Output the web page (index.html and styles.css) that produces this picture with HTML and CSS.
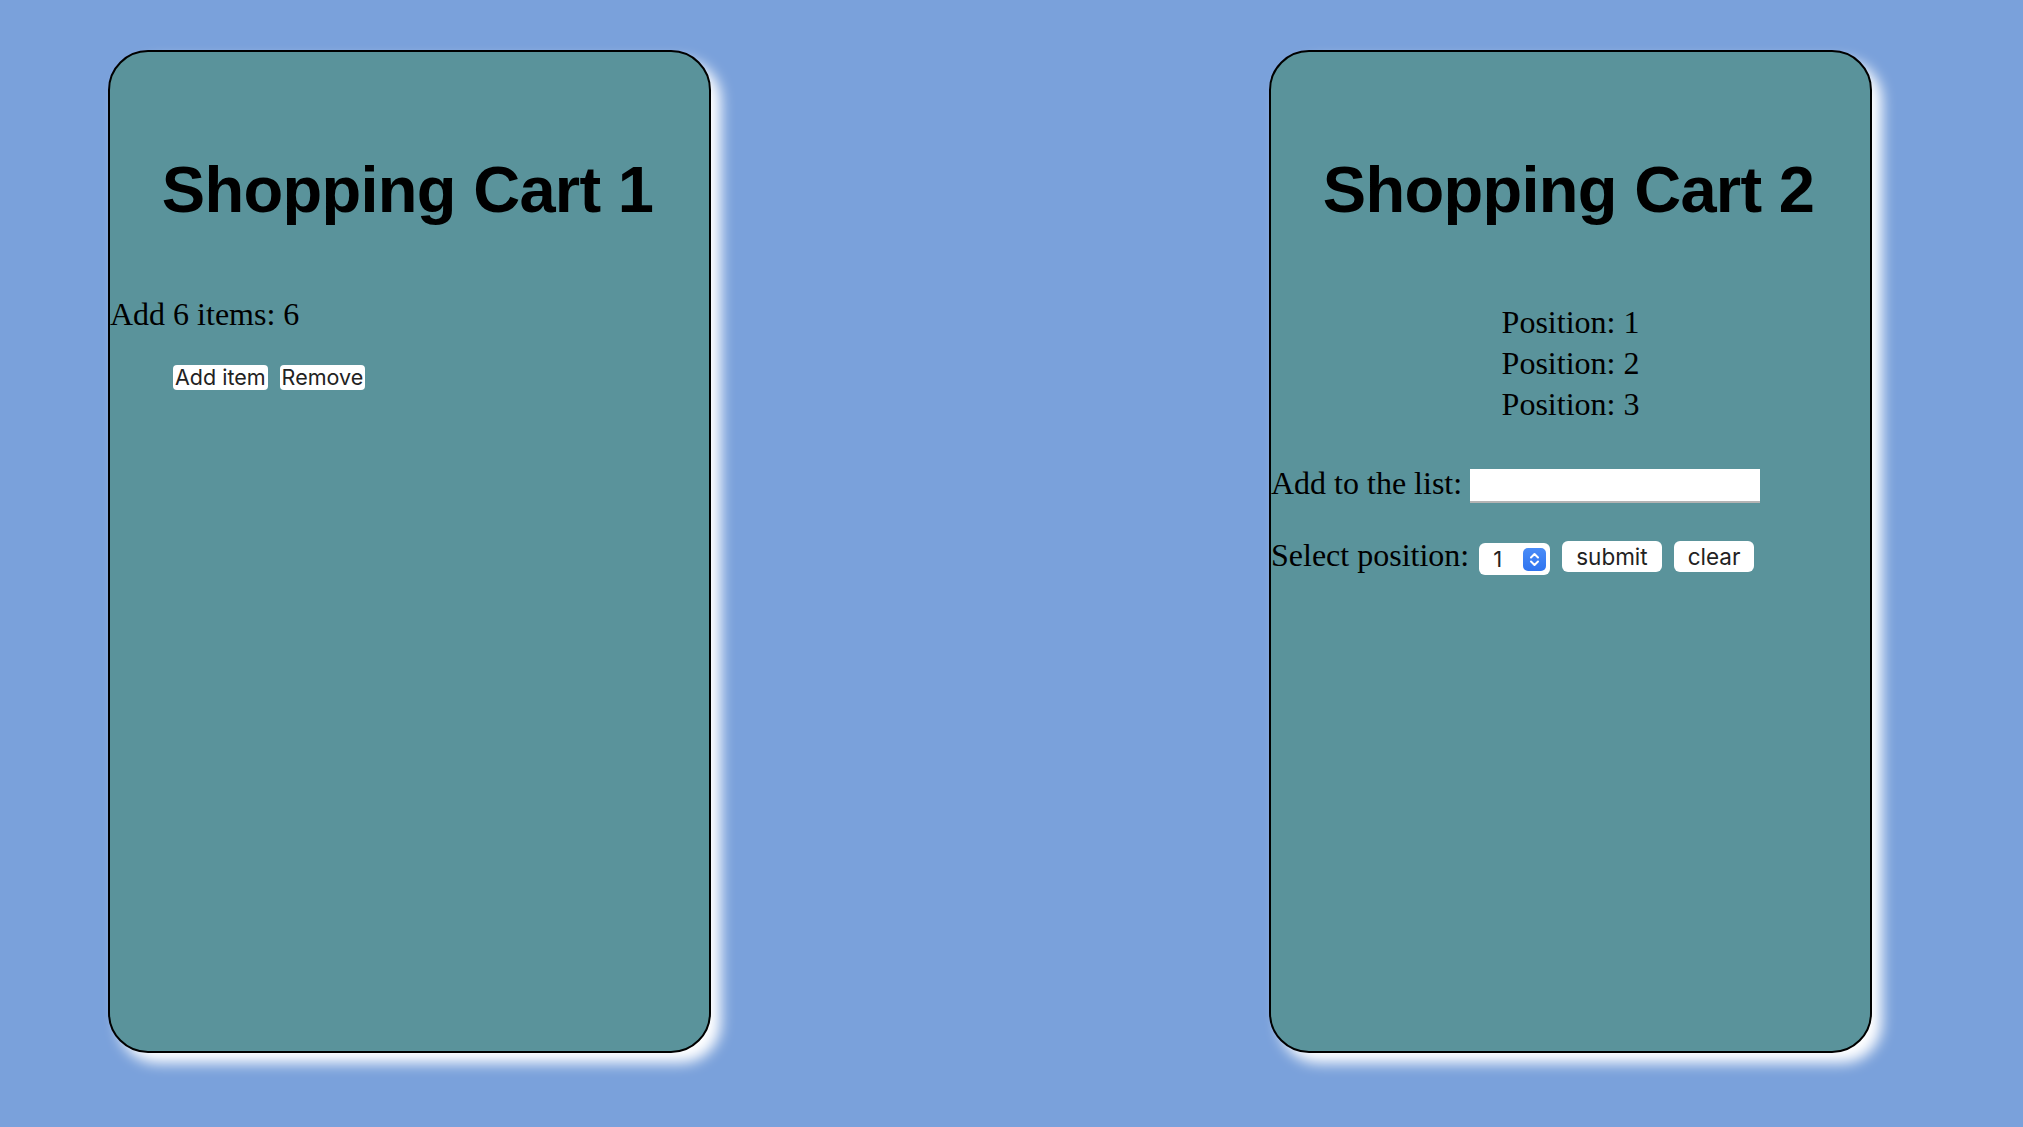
FILE: index.html
```html
<!DOCTYPE html>
<html lang="en">
<head>
<meta charset="utf-8">
<title>Shopping Carts</title>
<link rel="stylesheet" href="styles.css">
</head>
<body>
<main class="board">
  <section class="card">
    <h1 class="title">Shopping Cart 1</h1>
    <p class="count">Add 6 items: 6</p>
    <div class="actions">
      <button class="btn-small" type="button">Add item</button>
      <button class="btn-small" type="button">Remove</button>
    </div>
  </section>

  <section class="card">
    <h1 class="title">Shopping Cart 2</h1>
    <ul class="positions">
      <li>Position: 1</li>
      <li>Position: 2</li>
      <li>Position: 3</li>
    </ul>
    <div class="add-row">
      <label class="row-label" for="item">Add to the list:</label>
      <input class="text-input" id="item" type="text">
    </div>
    <div class="select-row">
      <label class="row-label" for="pos">Select position:</label>
      <span class="select-wrap">
        <select class="pos-select" id="pos">
          <option>1</option>
          <option>2</option>
          <option>3</option>
        </select>
        <span class="select-badge">
          <svg width="23" height="23" viewBox="0 0 23 23" aria-hidden="true">
            <path d="M8 9.5 L11.5 6 L15 9.5" fill="none" stroke="#fff" stroke-width="2" stroke-linecap="round" stroke-linejoin="round"/>
            <path d="M8 13.5 L11.5 17 L15 13.5" fill="none" stroke="#fff" stroke-width="2" stroke-linecap="round" stroke-linejoin="round"/>
          </svg>
        </span>
      </span>
      <button class="btn submit" type="button">submit</button>
      <button class="btn clear" type="button">clear</button>
    </div>
  </section>
</main>
</body>
</html>
```

FILE: styles.css
```css
html, body {
  margin: 0;
  padding: 0;
}

body {
  background: #7aa1db;
  min-height: 100vh;
  font-family: "Liberation Serif", "Times New Roman", serif;
  color: #000;
}

.board {
  display: flex;
  align-items: flex-start;
  gap: 558px;
  padding: 50px 0 0 108px;
}

.card {
  box-sizing: border-box;
  width: 603px;
  height: 1003px;
  flex: none;
  background: #5a939b;
  border: 2px solid #000;
  border-radius: 40px;
  box-shadow: 10px 10px 14px #fff;
}

.title {
  margin: 100px 0 0;
  padding-right: 4px;
  font-family: "Liberation Sans", Arial, Helvetica, sans-serif;
  font-weight: 700;
  font-size: 65px;
  line-height: 75px;
  letter-spacing: -0.7px;
  text-align: center;
}

.count {
  margin: 69px 0 0;
  font-size: 32px;
  line-height: 37px;
}

.actions {
  display: flex;
  gap: 12px;
  margin-top: 32px;
  padding-left: 63px;
}

.btn-small {
  height: 25px;
  padding: 0 2px;
  border: 0;
  border-radius: 4px;
  background: #fff;
  color: #222;
  font-family: Inter, "Noto Sans", sans-serif;
  font-size: 21.5px;
  line-height: 25px;
}

.positions {
  margin: 75px 0 0;
  padding: 0;
  list-style: none;
  text-align: center;
  font-size: 32px;
  line-height: 41px;
}

.add-row {
  display: flex;
  align-items: flex-start;
  gap: 8px;
  margin-top: 40px;
}

.row-label {
  font-size: 32px;
  line-height: 37px;
}

.text-input {
  box-sizing: border-box;
  width: 290px;
  height: 34px;
  margin-top: 4px;
  border: 0;
  background: #fff;
  box-shadow: inset 0 -2px 0 #b4b4b4;
  font-size: 20px;
}

.select-row {
  display: flex;
  align-items: flex-start;
  margin-top: 34px;
}

.select-wrap {
  position: relative;
  display: block;
  width: 71px;
  height: 32px;
  margin: 6px 0 0 10px;
}

.pos-select {
  appearance: none;
  -webkit-appearance: none;
  box-sizing: border-box;
  width: 71px;
  height: 32px;
  padding: 0 0 0 14px;
  border: 0;
  border-radius: 6px;
  background: #fff;
  color: #222;
  font-family: Inter, "Noto Sans", sans-serif;
  font-size: 22px;
}

.select-badge {
  position: absolute;
  top: 5px;
  right: 4px;
  width: 23px;
  height: 23px;
  border-radius: 5px;
  background: linear-gradient(#4a8cf7, #2f74f0);
  pointer-events: none;
}

.select-badge svg {
  display: block;
}

.btn {
  height: 31px;
  margin-top: 4px;
  padding: 0 14px;
  border: 0;
  border-radius: 6px;
  background: #fff;
  color: #222;
  font-family: Inter, "Noto Sans", sans-serif;
  font-size: 22.5px;
  line-height: 31px;
}

.submit {
  margin-left: 12px;
}

.clear {
  margin-left: 12px;
  padding: 0 14px;
}
```
